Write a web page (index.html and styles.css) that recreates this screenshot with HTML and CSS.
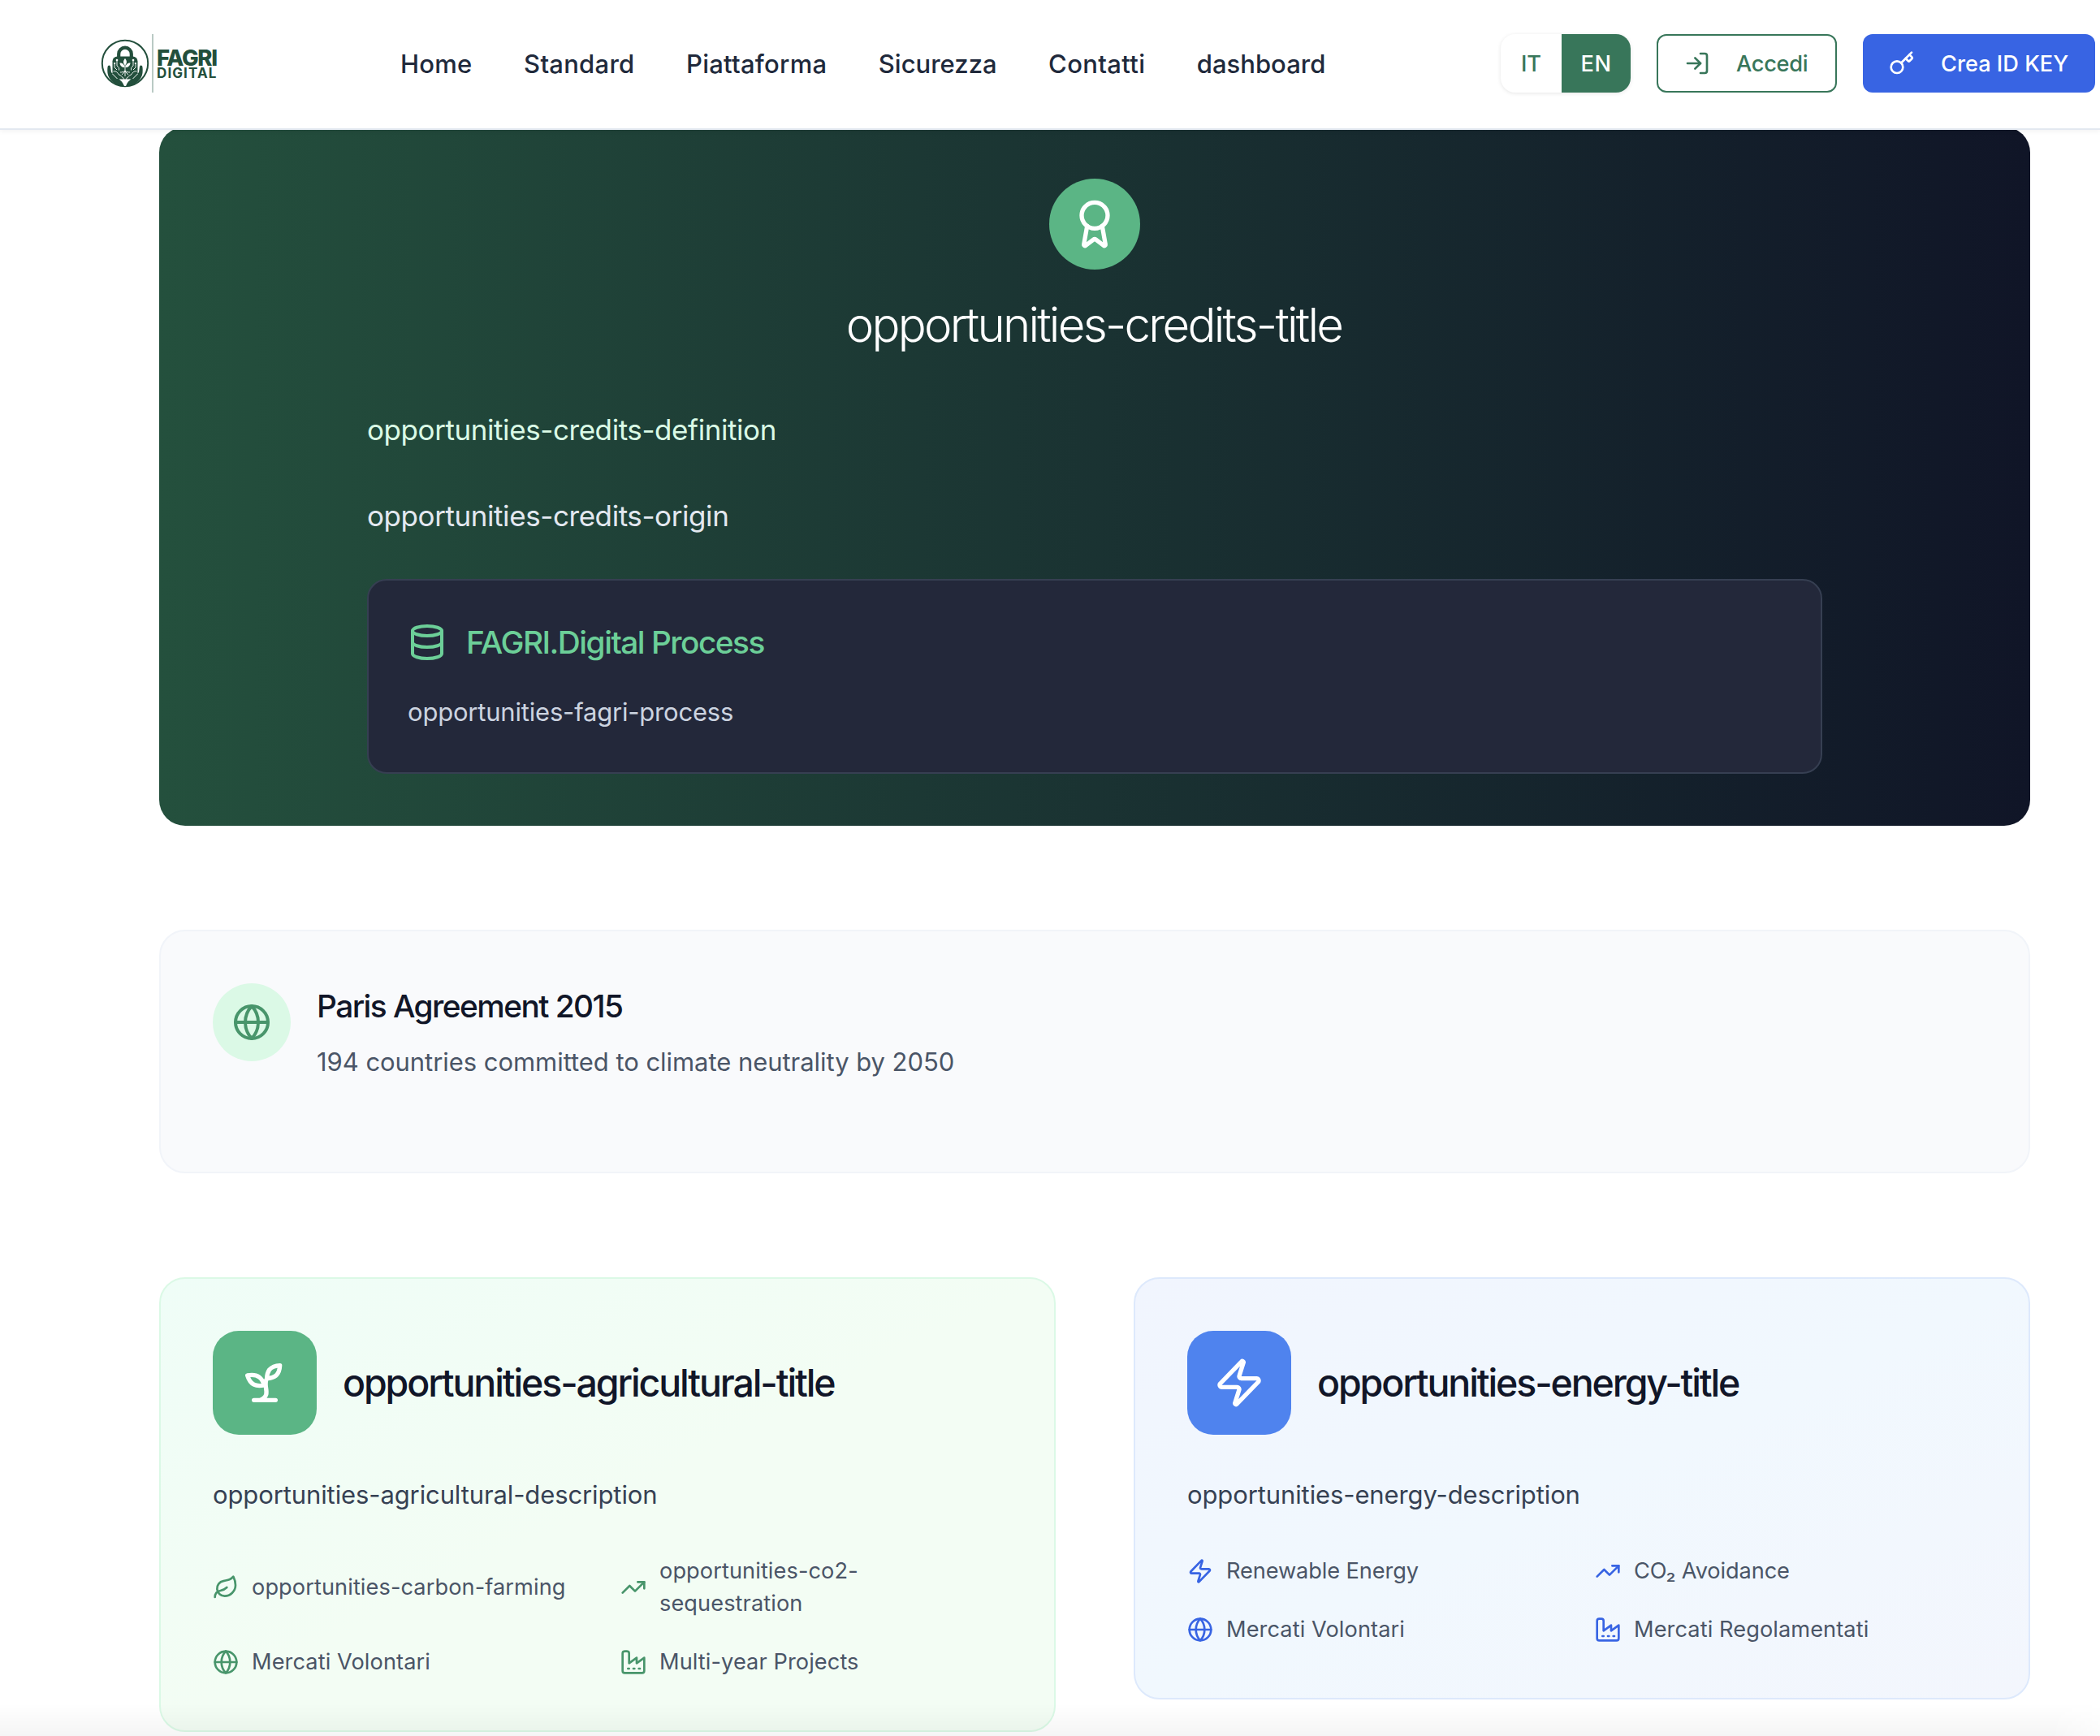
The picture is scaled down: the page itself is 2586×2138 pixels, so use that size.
FILE: index.html
```html
<!DOCTYPE html>
<html lang="en">
<head>
<meta charset="utf-8">
<title>FAGRI Digital</title>
<link rel="stylesheet" href="styles.css">
</head>
<body>
<svg class="sprite" width="0" height="0" aria-hidden="true">
  <symbol id="globe" viewBox="0 0 24 24"><circle cx="12" cy="12" r="10"/><path d="M12 2a14.5 14.5 0 0 0 0 20 14.5 14.5 0 0 0 0-20"/><path d="M2 12h20"/></symbol>
  <symbol id="zap" viewBox="0 0 24 24"><path d="M4 14a1 1 0 0 1-.78-1.63l9.9-10.2a.5.5 0 0 1 .86.46l-1.92 6.02A1 1 0 0 0 13 10h7a1 1 0 0 1 .78 1.63l-9.9 10.2a.5.5 0 0 1-.86-.46l1.92-6.02A1 1 0 0 0 11 14z"/></symbol>
  <symbol id="trend" viewBox="0 0 24 24"><path d="M22 7 13.5 15.5 8.5 10.5 2 17"/><path d="M16 7h6v6"/></symbol>
  <symbol id="factory" viewBox="0 0 24 24"><path d="M2 20a2 2 0 0 0 2 2h16a2 2 0 0 0 2-2V8l-7 5V8l-7 5V4a2 2 0 0 0-2-2H4a2 2 0 0 0-2 2Z"/><path d="M17 18h1"/><path d="M12 18h1"/><path d="M7 18h1"/></symbol>
  <symbol id="leaf" viewBox="0 0 24 24"><path d="M11 20A7 7 0 0 1 9.8 6.1C15.5 5 17 4.48 19 2c1 2 2 4.18 2 8 0 5.5-4.78 10-10 10Z"/><path d="M2 21c0-3 1.85-5.36 5.08-6C9.5 14.52 12 13 13 12"/></symbol>
  <symbol id="sprout" viewBox="0 0 24 24"><path d="M7 20h10"/><path d="M10 20c5.5-2.5.8-6.4 3-10"/><path d="M9.5 9.4c1.1.8 1.8 2.2 2.3 3.7-2 .4-3.5.4-4.8-.3-1.2-.6-2.3-1.9-3-4.2 2.8-.5 4.4 0 5.5.8z"/><path d="M14.1 6a7 7 0 0 0-1.1 4c1.9-.1 3.3-.6 4.3-1.4 1-1 1.6-2.3 1.7-4.6-2.7.1-4 1-4.9 2z"/></symbol>
  <symbol id="award" viewBox="0 0 24 24"><path d="m15.477 12.89 1.515 8.526a.5.5 0 0 1-.81.47l-3.58-2.687a1 1 0 0 0-1.197 0l-3.586 2.686a.5.5 0 0 1-.81-.469l1.514-8.526"/><circle cx="12" cy="8" r="6"/></symbol>
  <symbol id="database" viewBox="0 0 24 24"><ellipse cx="12" cy="5" rx="9" ry="3"/><path d="M3 5v14a9 3 0 0 0 18 0V5"/><path d="M3 12a9 3 0 0 0 18 0"/></symbol>
  <symbol id="login" viewBox="0 0 24 24"><path d="M15 3h4a2 2 0 0 1 2 2v14a2 2 0 0 1-2 2h-4"/><path d="m10 17 5-5-5-5"/><path d="M15 12H3"/></symbol>
  <symbol id="key" viewBox="0 0 24 24"><path d="m15.5 7.5 2.3 2.3a1 1 0 0 0 1.4 0l2.1-2.1a1 1 0 0 0 0-1.4L19 4"/><path d="m21 2-9.6 9.6"/><circle cx="7.5" cy="15.5" r="5.5"/></symbol>
</svg>

<header class="header">
  <a class="logo">
    <svg class="emblem" viewBox="0 0 60 60">
      <circle cx="30" cy="30" r="28.2" fill="none" stroke="#234f3c" stroke-width="2"/>
      <path d="M22.2 23v-4.500a7.800 7.800 0 0 1 15.600 0V23" fill="none" stroke="#234f3c" stroke-width="4.200"/>
      <rect x="14.500" y="21.500" width="31" height="28" rx="6" fill="#234f3c"/>
      <path d="M9 33c2-1.500 3 0 3.200 2l.8 6 5 5c4 3 9 6 11 12C19 58 9.500 51 8.500 42c-.3-3-.4-7 .5-9Z" fill="#234f3c"/>
      <path d="M51 33c-2-1.500-3 0-3.200 2l-.8 6-5 5c-4 3-9 6-11 12 10 0 19.500-7 20.500-16 .3-3 .4-7-.5-9Z" fill="#234f3c"/>
      <path d="M15.500 40c3-1 5 1 6.500 3.500 3 2 7 4 8 10 1-6 5-8 8-10 1.500-2.500 3.500-4.500 6.500-3.500M14.500 43l6 6M45.500 43l-6 6" fill="none" stroke="#fff" stroke-width="1"/>
      <path d="M30 52v6" stroke="#fff" stroke-width="2.400"/>
      <path d="M30 24c-2.600 3-2.600 6 0 8.500 2.600-2.500 2.600-5.500 0-8.500ZM23.500 29.500c.3 3.500 2.500 5.500 6 5.500-.2-3.500-2.500-5.500-6-5.500ZM36.500 29.500c-.3 3.500-2.500 5.500-6 5.500.2-3.500 2.500-5.500 6-5.500Z" fill="#fff"/>
      <path d="M30 32v14M30 39c-2 2-4 2-6 2M30 39c2 2 4 2 6 2M30 40l-4 4M30 40l4 4M20 27v6l2.500 2.500v3M17 30v5l3 3M40 27v6l-2.500 2.500v3M43 30v5l-3 3" fill="none" stroke="#fff" stroke-width=".9"/>
      <g fill="#fff"><circle cx="20" cy="26" r="1.300"/><circle cx="40" cy="26" r="1.300"/><circle cx="17.200" cy="30" r="1.100"/><circle cx="42.800" cy="30" r="1.100"/></g>
    </svg>
    <span class="logo-text"><span class="logo-top">FAGRI</span><span class="logo-sub">DIGITAL</span></span>
  </a>
  <nav class="nav">
    <a class="n1">Home</a><a class="n2">Standard</a><a class="n3">Piattaforma</a><a class="n4">Sicurezza</a><a class="n5">Contatti</a><a class="n6">dashboard</a>
  </nav>
  <div class="actions">
    <div class="lang"><span class="it">IT</span><span class="en">EN</span></div>
    <a class="btn outline"><svg class="icon"><use href="#login"/></svg><span>Accedi</span></a>
    <a class="btn solid"><svg class="icon"><use href="#key"/></svg><span>Crea ID KEY</span></a>
  </div>
</header>

<main class="main">
  <section class="hero">
    <div class="medal"><svg class="icon xl"><use href="#award"/></svg></div>
    <h2>opportunities-credits-title</h2>
    <div class="hero-body">
      <p class="definition">opportunities-credits-definition</p>
      <p class="origin">opportunities-credits-origin</p>
      <div class="process">
        <h3><svg class="icon lg"><use href="#database"/></svg><span>FAGRI.Digital Process</span></h3>
        <p>opportunities-fagri-process</p>
      </div>
    </div>
  </section>

  <section class="paris">
    <div class="badge"><svg class="icon lg"><use href="#globe"/></svg></div>
    <div>
      <h3>Paris Agreement 2015</h3>
      <p>194 countries committed to climate neutrality by 2050</p>
    </div>
  </section>

  <section class="cards">
    <article class="card green">
      <div class="card-head"><div class="tile"><svg class="icon xl"><use href="#sprout"/></svg></div><h3>opportunities-agricultural-title</h3></div>
      <p>opportunities-agricultural-description</p>
      <ul>
        <li><svg class="icon"><use href="#leaf"/></svg><span>opportunities-carbon-farming</span></li>
        <li><svg class="icon"><use href="#trend"/></svg><span class="narrow">opportunities-co2-sequestration</span></li>
        <li><svg class="icon"><use href="#globe"/></svg><span>Mercati Volontari</span></li>
        <li><svg class="icon"><use href="#factory"/></svg><span>Multi-year Projects</span></li>
      </ul>
    </article>
    <article class="card blue">
      <div class="card-head"><div class="tile"><svg class="icon xl"><use href="#zap"/></svg></div><h3>opportunities-energy-title</h3></div>
      <p>opportunities-energy-description</p>
      <ul>
        <li><svg class="icon"><use href="#zap"/></svg><span class="tight">Renewable Energy</span></li>
        <li><svg class="icon"><use href="#trend"/></svg><span class="tight">CO₂ Avoidance</span></li>
        <li><svg class="icon"><use href="#globe"/></svg><span>Mercati Volontari</span></li>
        <li><svg class="icon"><use href="#factory"/></svg><span>Mercati Regolamentati</span></li>
      </ul>
    </article>
  </section>
</main>
<div class="fade"></div>
</body>
</html>
```
FILE: styles.css
```css
*{box-sizing:border-box;margin:0;padding:0}
html,body{height:2138px;overflow:hidden}
body{background:#fff;font-family:Inter,"Liberation Sans",sans-serif;color:#111628;-webkit-font-smoothing:antialiased}
.sprite{display:block;height:0}
h2,h3{font-weight:500}
ul{list-style:none}
.icon{width:32px;height:32px;flex:none;fill:none;stroke:currentColor;stroke-width:2;stroke-linecap:round;stroke-linejoin:round}
.icon.lg{width:48px;height:48px}
.icon.xl{width:64px;height:64px}

/* Header */
.header{position:relative;z-index:2;height:160px;background:#fff;border-bottom:2px solid #e3e8f0;box-shadow:0 2px 6px rgba(0,0,0,.05);display:flex;align-items:center;padding:0 6px 2px 124px}
.logo{display:flex;align-items:center;width:369px;flex:none}
.emblem{width:60px;height:60px;flex:none}
.logo-text{display:flex;flex-direction:column;height:72px;margin-left:3px;padding:18px 0 0 4px;border-left:2px solid #b9cac4;color:#234f3c}
.logo-top{font-size:27.5px;font-weight:800;line-height:23px;letter-spacing:-1.3px}
.logo-sub{font-size:17px;font-weight:700;line-height:15px;letter-spacing:1.1px}
.nav{display:flex;gap:63.5px;padding-top:2px;font-size:31px;font-weight:500;color:#20293b;line-height:48px}
.n1,.n2,.n3{letter-spacing:.26px}
.n4,.n6{letter-spacing:0}
.n5{letter-spacing:.35px}
.actions{display:flex;gap:32px;margin-left:auto;font-size:27.2px;font-weight:500;line-height:40px}
.lang{display:flex;width:160px;height:72px;border-radius:18px;overflow:hidden;box-shadow:0 1px 5px rgba(0,0,0,.1);color:#38765a}
.lang span{display:flex;align-items:center;justify-content:center;padding-top:1px}
.it{width:75px}
.en{width:85px;background:#38765a;color:#fff;letter-spacing:.4px}
.btn{display:flex;align-items:center;gap:32px;height:72px;border-radius:12px;white-space:nowrap}
.btn span{padding-top:1px}
.outline{width:222px;padding-left:32px;border:2px solid #38765a;color:#38765a;letter-spacing:-.3px}
.solid{width:286px;padding-left:32px;background:#3864e3;color:#fff}

/* Sections */
.main{margin:-4px 86px 0 196px}
.hero{height:861px;padding-top:64px;border-radius:32px;background:linear-gradient(to right,#24503d,#101527);display:flex;flex-direction:column;align-items:center}
.medal{width:112px;height:112px;border-radius:50%;background:#5bb585;color:#fff;display:flex;align-items:center;justify-content:center}
.hero h2{margin:32px 2px 0 0;font-size:58.2px;font-weight:300;line-height:72px;letter-spacing:-2.76px;color:#fff}
.hero-body{width:1792px;margin-top:64px;font-size:35px;line-height:58.5px;letter-spacing:-.42px}
.definition{color:#dafae6;margin-bottom:47px}
.origin{color:#e3e8f0;margin-bottom:49px}
.process{height:240px;padding:48px;border:2px solid #363f52;border-radius:24px;background:#23283a}
.process h3{display:flex;align-items:center;gap:24px;font-size:38.8px;line-height:56px;letter-spacing:-1.51px;color:#6ccf98}
.process p{margin-top:32px;font-size:31px;line-height:52px;letter-spacing:-.2px;color:#ccd4e0}

.paris{height:300px;margin-top:128px;padding:64px;border:2px solid #f1f4f9;border-radius:32px;background:#f9fafc;display:flex;gap:32px}
.badge{width:96px;height:96px;border-radius:50%;background:#dbf9e6;color:#48956b;display:flex;align-items:center;justify-content:center}
.paris h3{font-size:38.8px;line-height:56px;letter-spacing:-1.55px}
.paris p{margin-top:15px;font-size:31px;line-height:52px;letter-spacing:-.05px;color:#4a5567}

.cards{display:grid;grid-template-columns:1fr 1fr;gap:96px;align-items:start;margin-top:128px}
.card{padding:64px;border-radius:32px;border:2px solid}
.card.green{border-color:#dbf9e6;background:linear-gradient(to bottom right,#effdf7,#f3fdf4 50%,#f3fdf4)}
.card.blue{border-color:#dde9fc;background:linear-gradient(to bottom right,#f1f5fe,#f1f8fe 50%,#f3f6fd)}
.card-head{display:flex;align-items:center;gap:32px}
.tile{width:128px;height:128px;border-radius:32px;color:#fff;display:flex;align-items:center;justify-content:center}
.green .tile{background:#5bb585}
.blue .tile{background:#4f83ee}
.card h3{font-size:46.5px;line-height:64px;letter-spacing:-2.13px}
.card p{margin-top:48px;font-size:31px;line-height:52px;letter-spacing:-.11px;color:#364153}
.card ul{display:grid;grid-template-columns:1fr 1fr;gap:32px;margin-top:48px;font-size:27.2px;line-height:40px;letter-spacing:.08px;color:#4a5567}
.card li{display:flex;align-items:center;gap:16px}
.green li .icon{color:#48956b}
.blue li .icon{color:#3864e3}
.narrow{width:260px}
.tight{letter-spacing:-.1px}

/* Soft shade along the bottom edge of the viewport */
.fade{position:fixed;left:0;right:0;bottom:0;height:40px;background:linear-gradient(to bottom,transparent,rgba(0,0,0,.04));-webkit-mask-image:linear-gradient(to left,rgba(0,0,0,.4),#000 60px);mask-image:linear-gradient(to left,rgba(0,0,0,.4),#000 60px)}
```
